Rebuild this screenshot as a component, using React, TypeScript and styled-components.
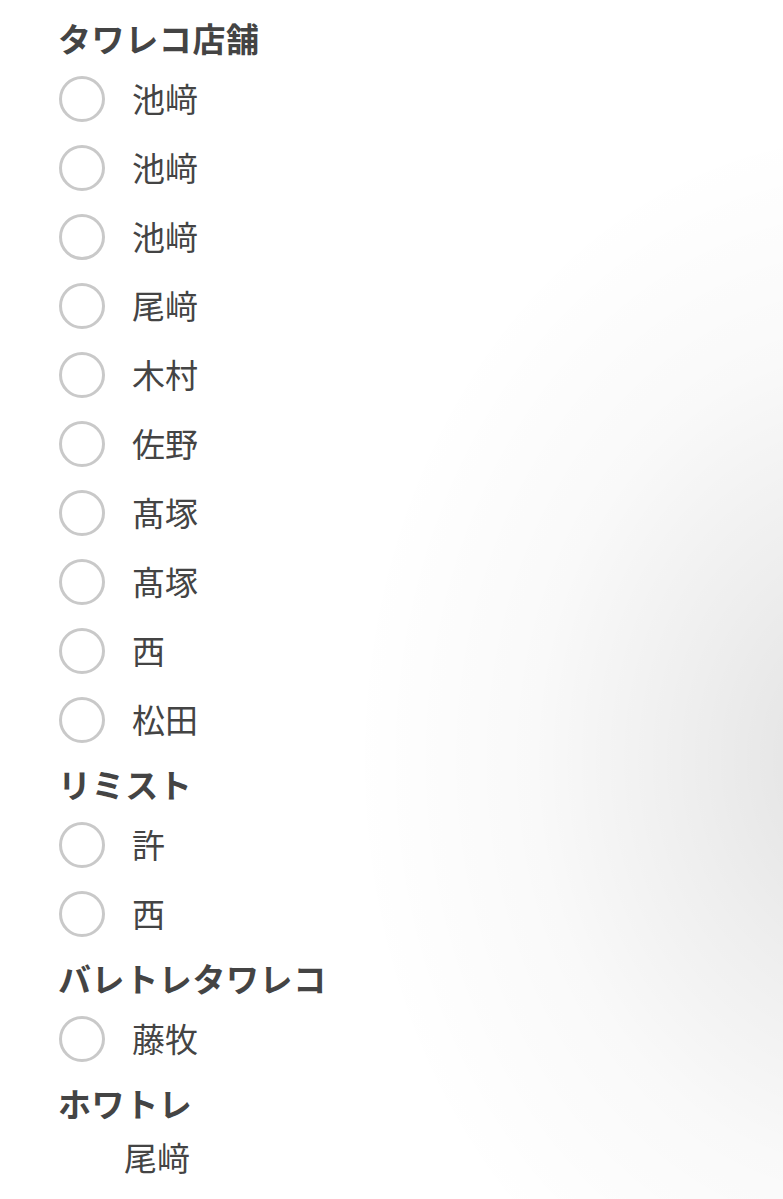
import React from "react";
import styled, { createGlobalStyle } from "styled-components";

const GlobalStyle = createGlobalStyle`
  html, body {
    margin: 0;
    padding: 0;
    background: #ffffff;
  }
  body {
    font-family: "Noto Sans CJK JP", "Noto Sans", sans-serif;
    color: #444444;
  }
`;

type Group = {
  title: string;
  items: string[];
  plain?: string[];
};

const groups: Group[] = [
  {
    title: "タワレコ店舗",
    items: ["池﨑", "池﨑", "池﨑", "尾﨑", "木村", "佐野", "髙塚", "髙塚", "西", "松田"],
  },
  { title: "リミスト", items: ["許", "西"] },
  { title: "バレトレタワレコ", items: ["藤牧"] },
  { title: "ホワトレ", items: [], plain: ["尾﨑"] },
];

const App = () => {
  return (
    <>
      <GlobalStyle />
      <Page>
        {groups.map((g, gi) => (
          <Section key={gi}>
            <Heading>{g.title}</Heading>
            {g.items.map((name, i) => (
              <Row key={i}>
                <HiddenInput type="radio" name={`group-${gi}`} />
                <Circle />
                <Name>{name}</Name>
              </Row>
            ))}
            {g.plain?.map((name, i) => (
              <PlainRow key={i}>{name}</PlainRow>
            ))}
          </Section>
        ))}
      </Page>
    </>
  );
};

export default App;

const Page = styled.div`
  min-height: 1199px;
  box-sizing: border-box;
  padding: 7px 0 0 58px;
  background: radial-gradient(
    ellipse 520px 640px at 870px 760px,
    rgba(0, 0, 0, 0.12) 0%,
    rgba(0, 0, 0, 0.065) 35%,
    rgba(0, 0, 0, 0.025) 65%,
    rgba(0, 0, 0, 0) 100%
  );
`;

const Section = styled.div`
  display: flex;
  flex-direction: column;
`;

const Heading = styled.div`
  margin-top: 6px;
  height: 50px;
  display: flex;
  align-items: center;
  font-size: 33px;
  font-weight: 700;
  color: #444444;
  letter-spacing: 0.6px;
`;

const Row = styled.label`
  height: 69px;
  display: flex;
  align-items: center;
  gap: 27px;
  cursor: pointer;
`;

const HiddenInput = styled.input`
  position: absolute;
  opacity: 0;
  width: 0;
  height: 0;
  margin: 0;
`;

const Circle = styled.span`
  width: 46px;
  height: 46px;
  box-sizing: border-box;
  border: 3px solid #c9c9c9;
  border-radius: 50%;
  flex-shrink: 0;
  margin-left: 1px;
  margin-top: 2px;
`;

const Name = styled.span`
  font-size: 33px;
  color: #444444;
  padding-top: 1px;
`;

const PlainRow = styled.div`
  height: 56px;
  display: flex;
  align-items: center;
  padding-left: 66px;
  padding-top: 1px;
  font-size: 33px;
  color: #444444;
`;
